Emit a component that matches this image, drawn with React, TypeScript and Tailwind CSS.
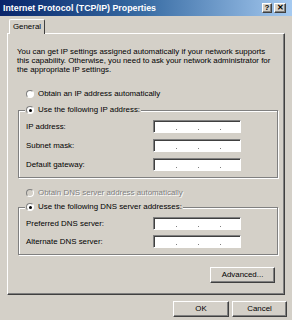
import React from "react";

const raised =
  "border border-t-white border-l-white border-r-[#404040] border-b-[#404040] shadow-[inset_-1px_-1px_0_#808080]";
const sunken =
  "border border-t-[#808080] border-l-[#808080] border-r-white border-b-white shadow-[inset_1px_1px_0_#404040]";
const etched =
  "border border-[#808080] shadow-[inset_1px_1px_0_#fff,1px_1px_0_#fff]";

function Radio({ checked, disabled }: { checked?: boolean; disabled?: boolean }) {
  return (
    <span
      className={`inline-flex items-center justify-center w-[8px] h-[8px] rounded-full border border-t-[#808080] border-l-[#808080] border-r-white border-b-white ${
        disabled ? "bg-[#d4d0c8]" : "bg-white"
      }`}
    >
      {checked && <span className="w-[3px] h-[3px] rounded-full bg-black" />}
    </span>
  );
}

function IpBox() {
  return (
    <div className={`w-[88px] h-[13px] bg-white ${sunken} flex items-center`}>
      <span className="ml-[22px] w-[1px] h-[1px] bg-[#808080] mt-[5px]" />
      <span className="ml-[21px] w-[1px] h-[1px] bg-[#808080] mt-[5px]" />
      <span className="ml-[21px] w-[1px] h-[1px] bg-[#808080] mt-[5px]" />
    </div>
  );
}

function Row({ label }: { label: string }) {
  return (
    <div className="flex items-center h-[13px]">
      <span className="w-[134px] pl-[7px]">{label}</span>
      <IpBox />
    </div>
  );
}

function Group({ legend, rows, gap }: { legend: string; rows: string[]; gap: string }) {
  return (
    <div className={`ml-[10px] w-[260px] ${etched} flex flex-col pb-[6px]`}>
      <div className="-mt-[6px] ml-[6px] w-fit bg-[#d4d0c8] px-[1px] flex items-center gap-[4px] h-[10px] leading-[10px]">
        <Radio checked />
        <span>{legend}</span>
      </div>
      <div className={`mt-[5px] flex flex-col ${gap}`}>
        {rows.map((r) => (
          <Row key={r} label={r} />
        ))}
      </div>
    </div>
  );
}

export default function App() {
  return (
    <div
      className="w-[292px] h-[320px] bg-[#d4d0c8] overflow-hidden flex flex-col text-[7.9px] text-black"
      style={{ fontFamily: '"Liberation Sans", Arial, sans-serif' }}
    >
      {/* Title bar */}
      <div className="h-[16px] bg-gradient-to-r from-[#0a246a] via-[#3a6ea5] to-[#a6caf0] flex items-center pl-[3px] pr-[6px]">
        <span className="text-white font-bold text-[8.8px] leading-none">
          Internet Protocol (TCP/IP) Properties
        </span>
        <div className="ml-auto flex items-center gap-[2px]">
          <div className={`w-[10px] h-[10px] bg-[#d4d0c8] ${raised} flex items-center justify-center font-bold text-[8px] leading-none`}>
            ?
          </div>
          <div className={`w-[12px] h-[10px] bg-[#d4d0c8] ${raised} flex items-center justify-center font-bold text-[8px] leading-none`}>
            ✕
          </div>
        </div>
      </div>

      {/* Tab */}
      <div className="mt-[3px] flex">
        <div className="relative z-10 ml-[9px] w-[36px] h-[15px] -mb-[1px] bg-[#d4d0c8] border-t border-l border-t-white border-l-white border-r border-r-[#404040] rounded-t-[2px] flex items-center justify-center">
          General
        </div>
      </div>

      {/* Panel */}
      <div className={`ml-[7px] w-[278px] h-[262px] ${raised} flex flex-col`}>
        <p className="mt-[13px] ml-[9px] w-[266px] leading-[9px] whitespace-nowrap">
          You can get IP settings assigned automatically if your network supports
          <br />
          this capability. Otherwise, you need to ask your network administrator for
          <br />
          the appropriate IP settings.
        </p>

        <div className="mt-[15px] ml-[18px] flex items-center gap-[4px] h-[10px]">
          <Radio />
          <span>Obtain an IP address automatically</span>
        </div>

        <div className="mt-[11px]">
          <Group
            legend="Use the following IP address:"
            rows={["IP address:", "Subnet mask:", "Default gateway:"]}
            gap="gap-[6px]"
          />
        </div>

        <div className="mt-[10px] ml-[18px] flex items-center gap-[4px] h-[10px] text-[#808080] [text-shadow:1px_1px_0_#fff]">
          <Radio disabled />
          <span>Obtain DNS server address automatically</span>
        </div>

        <div className="mt-[9px]">
          <Group
            legend="Use the following DNS server addresses:"
            rows={["Preferred DNS server:", "Alternate DNS server:"]}
            gap="gap-[5px]"
          />
        </div>

        <div className="mt-[12px] ml-[202px]">
          <button className={`w-[65px] h-[16px] bg-[#d4d0c8] ${raised} flex items-center justify-center`}>
            Advanced...
          </button>
        </div>
      </div>

      {/* Bottom buttons */}
      <div className="mt-[6px] ml-[173px] flex gap-[3px]">
        <button className={`w-[56px] h-[16px] bg-[#d4d0c8] ${raised} flex items-center justify-center`}>
          OK
        </button>
        <button className={`w-[55px] h-[16px] bg-[#d4d0c8] ${raised} flex items-center justify-center`}>
          Cancel
        </button>
      </div>
    </div>
  );
}
